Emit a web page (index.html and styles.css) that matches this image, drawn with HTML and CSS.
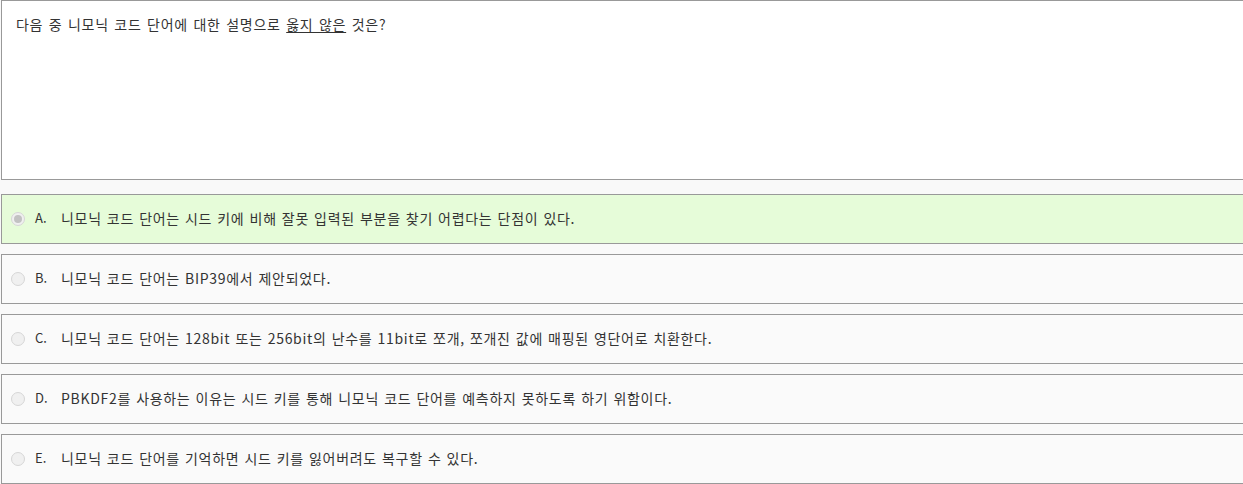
FILE: index.html
```html
<!DOCTYPE html>
<html lang="ko">
<head>
  <meta charset="UTF-8">
  <title>문제</title>
  <link rel="stylesheet" href="styles.css">
</head>
<body>
  <div class="quiz">
    <!-- 문제 -->
    <div class="question">
      다음 중 니모닉 코드 단어에 대한 설명으로 <u>옳지 않은</u> 것은?
    </div>

    <!-- 보기 -->
    <ul class="choices">
      <li class="choice selected">
        <span class="radio"></span>
        <span class="label">A.</span>
        <span class="text">니모닉 코드 단어는 시드 키에 비해 잘못 입력된 부분을 찾기 어렵다는 단점이 있다.</span>
      </li>
      <li class="choice">
        <span class="radio"></span>
        <span class="label">B.</span>
        <span class="text">니모닉 코드 단어는 BIP39에서 제안되었다.</span>
      </li>
      <li class="choice">
        <span class="radio"></span>
        <span class="label">C.</span>
        <span class="text">니모닉 코드 단어는 128bit 또는 256bit의 난수를 11bit로 쪼개, 쪼개진 값에 매핑된 영단어로 치환한다.</span>
      </li>
      <li class="choice">
        <span class="radio"></span>
        <span class="label">D.</span>
        <span class="text">PBKDF2를 사용하는 이유는 시드 키를 통해 니모닉 코드 단어를 예측하지 못하도록 하기 위함이다.</span>
      </li>
      <li class="choice">
        <span class="radio"></span>
        <span class="label">E.</span>
        <span class="text">니모닉 코드 단어를 기억하면 시드 키를 잃어버려도 복구할 수 있다.</span>
      </li>
    </ul>
  </div>
</body>
</html>
```

FILE: styles.css
```css
/* Global */
html, body {
  margin: 0;
  padding: 0;
  overflow: hidden;
}
body {
  background: #f9f9f9;
  color: #333;
  font-family: "Noto Sans CJK KR", "Noto Sans", sans-serif;
  font-size: 13px;
}

.quiz {
  margin-left: 1px;
  width: 1260px;
}

/* Question */
.question {
  height: 158px;
  padding: 12px 14px 8px;
  background: #fff;
  border: 1px solid #999;
  line-height: 22px;
  font-size: 14px;
  letter-spacing: 0.7px;
  word-spacing: 1px;
}
.question u {
  text-underline-offset: 2px;
}

/* Choices */
.choices {
  list-style: none;
  margin: 14px 0 0;
  padding: 0;
  display: flex;
  flex-direction: column;
  gap: 10px;
}
.choice {
  height: 48px;
  display: flex;
  align-items: center;
  padding: 0 9px;
  background: #fafafa;
  border: 1px solid #999;
}
.choice.selected { background: #e6fcd9; }

.radio {
  width: 12px;
  height: 12px;
  border: 1px solid #d6d6d6;
  border-radius: 50%;
  background: #f0f0f0;
  display: flex;
  align-items: center;
  justify-content: center;
}
.choice.selected .radio::after {
  content: "";
  width: 8px;
  height: 8px;
  border-radius: 50%;
  background: #c2c2c2;
}

.label {
  width: 26px;
  margin-left: 10px;
  margin-top: -4px;
  font-size: 13px;
}
.text {
  margin-top: -2px;
  line-height: 22px;
  font-size: 14px;
  letter-spacing: 0.7px;
  word-spacing: 0.5px;
}
```
